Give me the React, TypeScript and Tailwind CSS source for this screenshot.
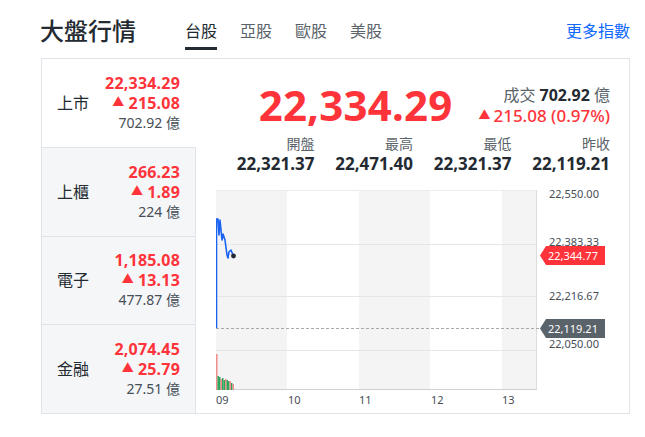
import React from 'react';

interface IndexRow {
  name: string;
  price: string;
  change: string;
  volume: string;
  active?: boolean;
}

const rows: IndexRow[] = [
  { name: '上市', price: '22,334.29', change: '215.08', volume: '702.92', active: true },
  { name: '上櫃', price: '266.23', change: '1.89', volume: '224' },
  { name: '電子', price: '1,185.08', change: '13.13', volume: '477.87' },
  { name: '金融', price: '2,074.45', change: '25.79', volume: '27.51' },
];

const stats = [
  { label: '開盤', value: '22,321.37' },
  { label: '最高', value: '22,471.40' },
  { label: '最低', value: '22,321.37' },
  { label: '昨收', value: '22,119.21' },
];

const tabs = ['台股', '亞股', '歐股', '美股'];

// volume bars: [x, top, up?]
const volume: [number, number, boolean][] = [
  [0, 170, true],
  [1.5, 192, false],
  [3, 193, false],
  [4.5, 195, true],
  [6, 194, false],
  [7.5, 196, false],
  [9, 195, true],
  [10.5, 196, false],
  [12, 197, false],
  [13.5, 197, true],
  [15, 199, false],
  [16.5, 200, true],
];

const PriceChart: React.FC = () => {
  const line = '0.5,144 0.5,35 2,35 3,51 4,36 6,56 7,50 9,56 11,71 12,74 13,68 15,66 17,71';
  return (
    <svg width="394" height="226" viewBox="0 0 394 226" className="block">
      <rect x="0" y="6" width="71" height="200" fill="#f4f4f5" />
      <rect x="143" y="6" width="71" height="200" fill="#f4f4f5" />
      <rect x="286" y="6" width="35" height="200" fill="#f4f4f5" />
      <line x1="0" y1="6.5" x2="321" y2="6.5" stroke="#ececec" />
      <line x1="0" y1="60.5" x2="321" y2="60.5" stroke="#e6e6e6" />
      <line x1="0" y1="112.5" x2="321" y2="112.5" stroke="#e6e6e6" />
      <line x1="0" y1="166.5" x2="321" y2="166.5" stroke="#e6e6e6" />
      <line x1="320.5" y1="6" x2="320.5" y2="206" stroke="#dcdcdc" />
      <line x1="0" y1="205.5" x2="321" y2="205.5" stroke="#d0d0d0" />
      <line x1="0" y1="144.5" x2="326" y2="144.5" stroke="#a8a8a8" strokeDasharray="3 2" />

      {volume.map(([x, top, up]) => (
        <rect key={x} x={x} y={top} width="1.5" height={206 - top} fill={up ? '#ef8c8c' : '#2fa55c'} />
      ))}

      <polyline points={line} fill="none" stroke="#1a63f2" strokeWidth="1.6" strokeLinejoin="round" />
      <circle cx="17.5" cy="72" r="2.4" fill="#232a31" />

      <g fontSize="11" fill="#464e56" fontFamily='"Noto Sans", sans-serif'>
        <text x="333" y="14">22,550.00</text>
        <text x="333" y="62">22,383.33</text>
        <text x="333" y="116">22,216.67</text>
        <text x="333" y="164">22,050.00</text>
        <text x="0" y="220">09</text>
        <text x="72" y="220">10</text>
        <text x="143" y="220">11</text>
        <text x="215" y="220">12</text>
        <text x="286" y="220">13</text>
      </g>

      <polygon points="324,71.5 330,62 389,62 389,81 330,81" fill="#ff333a" />
      <text x="332" y="76" fontSize="11" fill="#ffffff" fontFamily='"Noto Sans", sans-serif'>22,344.77</text>
      <polygon points="324,144.5 330,135 389,135 389,154 330,154" fill="#5b636a" />
      <text x="332" y="149" fontSize="11" fill="#ffffff" fontFamily='"Noto Sans", sans-serif'>22,119.21</text>
    </svg>
  );
};

const App: React.FC = () => {
  return (
    <div
      className="w-[645px] h-[437px] bg-white pl-[41px] pr-[15px] pt-[12px] text-[#232a31]"
      style={{ fontFamily: '"Noto Sans", "Noto Sans CJK TC", sans-serif' }}
    >
      {/* Header */}
      <div className="flex items-stretch h-[38px]">
        <h1 className="flex items-center text-[24px] font-medium leading-none -ml-[1px]">大盤行情</h1>
        <div className="flex items-stretch ml-[49px] gap-[23px]">
          {tabs.map((tab, i) => (
            <div
              key={tab}
              className={`flex items-center pt-[3px] text-[16px] border-b-[3px] ${
                i === 0 ? 'border-[#232a31] text-[#232a31]' : 'border-transparent text-[#5b636a]'
              }`}
            >
              {tab}
            </div>
          ))}
        </div>
        <a className="ml-auto flex items-center text-[16px] text-[#0f69ff]">更多指數</a>
      </div>

      {/* Card */}
      <div className="mt-[8px] h-[356px] w-[589px] border border-[#e0e4e9] flex">
        <div className="w-[154px] flex flex-col">
          {rows.map((row, i) => (
            <div
              key={row.name}
              className={`flex-1 flex items-center justify-between pl-[15px] pr-[15px] ${
                row.active ? 'bg-white border-r border-transparent' : 'bg-[#f5f6f8] border-r border-[#e0e4e9]'
              } ${i > 0 ? 'border-t border-t-[#e0e4e9]' : ''}`}
            >
              <span className="text-[16px]">{row.name}</span>
              <div className="flex flex-col items-end">
                <span className="text-[16px] font-bold text-[#ff333a] leading-[20px] tracking-[0.2px]">{row.price}</span>
                <span className="text-[16px] font-bold text-[#ff333a] leading-[20px] tracking-[0.2px] flex items-center">
                  <span className="text-[12px] mr-[4px]">▲</span>
                  {row.change}
                </span>
                <span className="text-[14px] text-[#464e56] leading-[20px]">
                  {row.volume} 億
                </span>
              </div>
            </div>
          ))}
        </div>

        <div className="flex-1 flex flex-col pl-[20px] pr-[19px]">
          <div className="flex justify-end items-center gap-[26px] pt-[20px] h-[72px]">
            <span className="text-[42px] font-bold text-[#ff333a] leading-none tracking-[0.2px]">22,334.29</span>
            <div className="flex flex-col items-end">
              <span className="text-[16px] leading-[20px] text-[#5b636a]">
                成交 <span className="font-bold text-[#232a31]">702.92</span> 億
              </span>
              <span className="text-[17px] leading-[21px] font-medium text-[#ff333a] flex items-center">
                <span className="text-[12px] mr-[3px]">▲</span>215.08 (0.97%)
              </span>
            </div>
          </div>

          <div className="grid grid-cols-4 mt-[3px]">
            {stats.map((s) => (
              <div key={s.label} className="flex flex-col items-end">
                <span className="text-[14px] leading-[20px] text-[#5b636a]">{s.label}</span>
                <span className="text-[17px] leading-[20px] font-bold">{s.value}</span>
              </div>
            ))}
          </div>

          <div className="mt-[10px]">
            <PriceChart />
          </div>
        </div>
      </div>
    </div>
  );
};

export default App;
